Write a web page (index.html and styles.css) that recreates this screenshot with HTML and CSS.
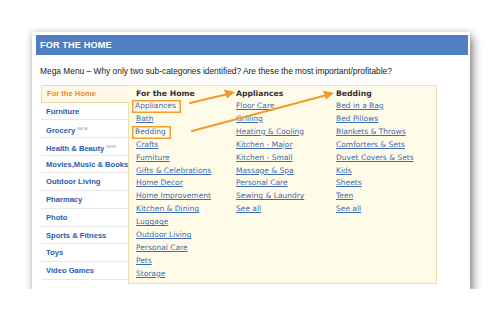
FILE: index.html
```html
<!DOCTYPE html>
<html lang="en">
<head>
  <meta charset="UTF-8" />
  <title>For the Home - Mega Menu</title>
  <link rel="stylesheet" href="styles.css">
</head>
<body>
  <div class="card">
    <header class="bar">FOR THE HOME</header>
    <p class="intro">Mega Menu – Why only two sub-categories identified? Are these the most important/profitable?</p>

    <div class="menu">
      <ul class="side">
        <li class="active">For the Home</li>
        <li>Furniture</li>
        <li>Grocery <sup>BETA</sup></li>
        <li>Health &amp; Beauty <sup>NEW</sup></li>
        <li>Movies,Music &amp; Books</li>
        <li>Outdoor Living</li>
        <li>Pharmacy</li>
        <li>Photo</li>
        <li>Sports &amp; Fitness</li>
        <li>Toys</li>
        <li>Video Games</li>
      </ul>

      <div class="panel">
        <div class="col">
          <h3>For the Home</h3>
          <a href="#"><span class="hl">Appliances</span></a>
          <a href="#">Bath</a>
          <a href="#"><span class="hl">Bedding</span></a>
          <a href="#">Crafts</a>
          <a href="#">Furniture</a>
          <a href="#">Gifts &amp; Celebrations</a>
          <a href="#">Home Decor</a>
          <a href="#">Home Improvement</a>
          <a href="#">Kitchen &amp; Dining</a>
          <a href="#">Luggage</a>
          <a href="#">Outdoor Living</a>
          <a href="#">Personal Care</a>
          <a href="#">Pets</a>
          <a href="#">Storage</a>
        </div>
        <div class="col">
          <h3>Appliances</h3>
          <a href="#">Floor Care</a>
          <a href="#">Grilling</a>
          <a href="#">Heating &amp; Cooling</a>
          <a href="#">Kitchen - Major</a>
          <a href="#">Kitchen - Small</a>
          <a href="#">Massage &amp; Spa</a>
          <a href="#">Personal Care</a>
          <a href="#">Sewing &amp; Laundry</a>
          <a href="#">See all</a>
        </div>
        <div class="col">
          <h3>Bedding</h3>
          <a href="#">Bed in a Bag</a>
          <a href="#">Bed Pillows</a>
          <a href="#">Blankets &amp; Throws</a>
          <a href="#">Comforters &amp; Sets</a>
          <a href="#">Duvet Covers &amp; Sets</a>
          <a href="#">Kids</a>
          <a href="#">Sheets</a>
          <a href="#">Teen</a>
          <a href="#">See all</a>
        </div>
      </div>

      <!-- annotation arrows -->
      <svg class="arrows" width="395" height="199" viewBox="0 0 395 199">
        <g stroke="#f29a2e" stroke-width="2" fill="#f29a2e" stroke-linecap="round">
          <line x1="149" y1="18" x2="185" y2="9.5" />
          <polygon points="194,7 183,4.5 186,13.5" stroke="none" />
          <line x1="151" y1="46" x2="284" y2="10.5" />
          <polygon points="293,8 282,5.5 285,14.5" stroke="none" />
        </g>
      </svg>
    </div>
  </div>
</body>
</html>
```

FILE: styles.css
```css
body {
  margin: 0;
  background-color: #fff;
  font-family: "Liberation Sans", Arial, sans-serif;
}
.card {
  margin: 32px 0 0 32px;
  width: 438px;
  height: 257px;
  box-sizing: border-box;
  padding: 3px 2px 0 4px;
  background-color: #fff;
  box-shadow: 3px 5px 9px rgba(0, 0, 0, 0.45), 0 0 6px rgba(0, 0, 0, 0.15);
}
.bar {
  height: 20px;
  background-color: #4f7fc0;
  color: #fff;
  font-weight: bold;
  font-size: 9.2px;
  line-height: 21px;
  padding-left: 4px;
  letter-spacing: 0.1px;
}
.intro {
  margin: 10px 0 0 4px;
  font-size: 8.4px;
  line-height: 12px;
  color: #222;
}
.menu {
  position: relative;
  display: flex;
  align-items: flex-start;
  margin: 8px 0 0 5px;
  width: 395px;
}
.side {
  list-style: none;
  margin: 0;
  padding: 0;
  width: 87px;
  flex-shrink: 0;
}
.side li {
  height: 17.7px;
  line-height: 17.7px;
  padding-left: 5px;
  box-sizing: border-box;
  border-bottom: 1px solid #e8e8e8;
  font-size: 7.6px;
  font-weight: bold;
  color: #2a5db0;
  white-space: nowrap;
  overflow: hidden;
}
.side li.active {
  position: relative;
  z-index: 1;
  margin-right: -1px;
  background-color: #fff8e6;
  border: 1px solid #efd9a6;
  border-right: none;
  color: #ea8a2a;
  line-height: 15.7px;
}
.side sup {
  font-size: 4px;
  font-weight: normal;
  color: #8a9ab8;
  vertical-align: 3px;
}
.panel {
  display: flex;
  flex: 1;
  height: 199px;
  box-sizing: border-box;
  padding: 2px 0 0 7px;
  background-color: #fffbe9;
  border: 1px solid #efdfae;
  font-family: "DejaVu Sans", Verdana, sans-serif;
}
.col {
  width: 100px;
  display: flex;
  flex-direction: column;
  align-items: flex-start;
}
.col h3 {
  margin: 0;
  font-size: 7.7px;
  line-height: 12px;
  color: #333;
}
.col a {
  font-size: 7.5px;
  line-height: 12.9px;
  color: #3d6cb0;
  text-decoration: underline;
  white-space: nowrap;
}
.hl {
  display: inline-block;
  padding: 0 5px 0 3px;
  margin-left: -4px;
  box-shadow: inset 0 0 0 1.5px #f0a030;
}
.arrows {
  position: absolute;
  left: 0;
  top: 0;
  pointer-events: none;
}
```
